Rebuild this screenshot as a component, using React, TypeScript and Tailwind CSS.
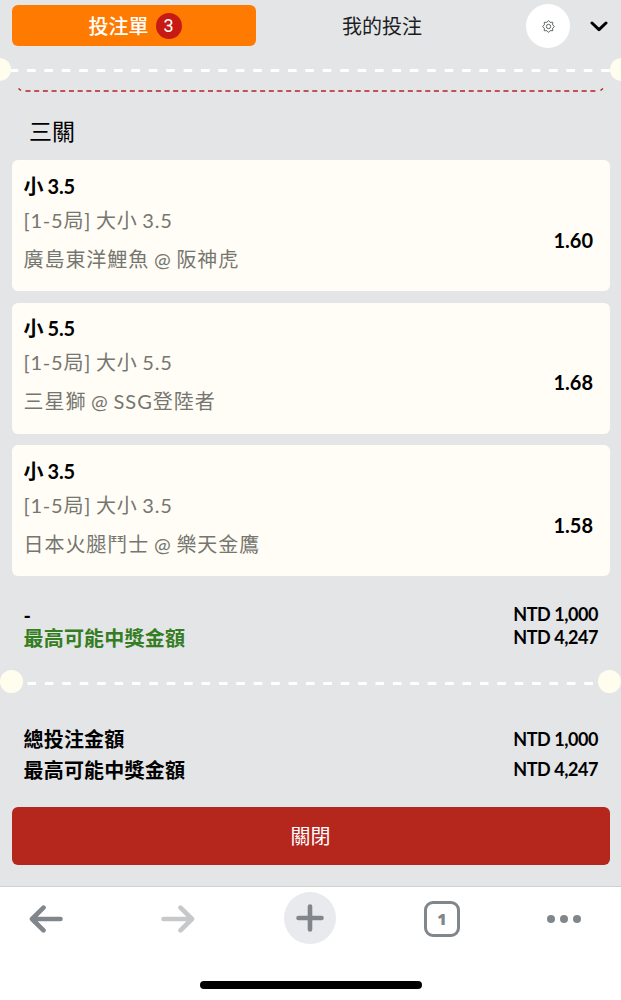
interface Selection {
  pick: string;
  market: string;
  match: string;
  odds: string;
}

const selections: Selection[] = [
  {
    pick: "小 3.5",
    market: "[1-5局] 大小 3.5",
    match: "廣島東洋鯉魚 @ 阪神虎",
    odds: "1.60",
  },
  {
    pick: "小 5.5",
    market: "[1-5局] 大小 5.5",
    match: "三星獅 @ SSG登陸者",
    odds: "1.68",
  },
  {
    pick: "小 3.5",
    market: "[1-5局] 大小 3.5",
    match: "日本火腿鬥士 @ 樂天金鷹",
    odds: "1.58",
  },
];

function SelectionCard({ selection }: { selection: Selection }) {
  return (
    <div className="flex h-[131px] items-center justify-between rounded-md bg-[#fffdf6] pr-[16.5px] pl-[12px]">
      <div className="-mt-[3px] text-[20px] tracking-[0.95px] text-[#767670] [word-spacing:-1.3px]">
        <p className="h-[33px] leading-[33px] font-bold tracking-[-0.25px] text-black [word-spacing:-0.3px]">
          {selection.pick}
        </p>
        <p className="h-[37px] leading-[35px] tracking-[0.82px]">
          {selection.market}
        </p>
        <p className="h-[39px] leading-[39px]">{selection.match}</p>
      </div>
      <span className="mt-[28px] text-[20px] leading-[30px] font-bold text-black">
        {selection.odds}
      </span>
    </div>
  );
}

function TicketDivider({ edge }: { edge?: boolean }) {
  return (
    <div
      className={
        edge
          ? "-mx-[12px] flex h-[24px] items-center justify-between"
          : "flex h-[24px] items-center justify-between"
      }
    >
      <span className="h-[23px] w-[23px] shrink-0 rounded-full bg-[#fffdee]" />
      <svg
        className="mt-[3px] h-[3px] min-w-0 flex-1"
        preserveAspectRatio="none"
      >
        <line
          x1={edge ? 0 : 4.5}
          y1="1.5"
          x2="100%"
          y2="1.5"
          stroke="white"
          strokeWidth="3"
          strokeDasharray="8.6 8.8"
          strokeDashoffset={edge ? 1.4 : 0}
        />
      </svg>
      <span className="h-[23px] w-[23px] shrink-0 rounded-full bg-[#fffdee]" />
    </div>
  );
}

function GearIcon() {
  return (
    <svg
      width="13"
      height="13"
      viewBox="0 0 24 24"
      fill="none"
      stroke="#55595c"
      strokeWidth="1.7"
      strokeLinejoin="round"
    >
      <path d="M12 1 L15 4.3 L19.8 4.2 L19.7 9 L23 12 L19.7 15 L19.8 19.8 L15 19.7 L12 23 L9 19.7 L4.2 19.8 L4.3 15 L1 12 L4.3 9 L4.2 4.2 L9 4.3 Z" />
      <circle cx="12" cy="12" r="4" />
    </svg>
  );
}

function BetSlipTabs() {
  return (
    <div className="flex h-[57px] items-start pt-[5px] pr-[13px] pl-[12px] text-[20px]">
      <div className="flex h-[41px] w-[244px] items-center justify-center gap-[7px] rounded-md bg-[#ff7a00] pl-[2px] text-white">
        <span className="leading-[30px] font-medium">投注單</span>
        <span className="flex h-[26px] w-[26px] items-center justify-center rounded-full bg-[#c71a12] font-['Roboto'] text-[18px] leading-none">
          3
        </span>
      </div>
      <div className="flex h-[41px] w-[252px] items-center justify-center text-[#1b1d1f]">
        我的投注
      </div>
      <div className="-mt-[1px] ml-[18px] flex h-[44px] w-[44px] items-center justify-center rounded-full bg-white">
        <GearIcon />
      </div>
      <svg
        className="mt-[16px] ml-auto"
        width="18"
        height="12"
        viewBox="0 0 18 12"
        fill="none"
        stroke="black"
        strokeWidth="3"
        strokeLinecap="round"
        strokeLinejoin="round"
      >
        <path d="M2 2 L9 8.7 L16 2" />
      </svg>
    </div>
  );
}

function BrowserBar() {
  return (
    <div className="flex h-[114px] flex-col items-center border-t border-[#cfd0d2] bg-white text-[#80868b]">
      <div className="mt-[5px] flex h-[52px] w-full items-center gap-[88px] pl-[29px]">
        <svg
          className="mt-[1px] shrink-0"
          width="34"
          height="28"
          viewBox="0 0 34 28"
          fill="none"
          stroke="currentColor"
          strokeWidth="4.6"
          strokeLinecap="round"
          strokeLinejoin="round"
        >
          <path d="M31.5 14 H3 M14.5 2.7 L3 14 L14.5 25.3" />
        </svg>
        <svg
          className="mt-[1px] ml-[10px] shrink-0"
          width="34"
          height="28"
          viewBox="0 0 34 28"
          fill="none"
          stroke="#c7c8c9"
          strokeWidth="4.6"
          strokeLinecap="round"
          strokeLinejoin="round"
        >
          <path d="M2.5 14 H31 M19.5 2.7 L31 14 L19.5 25.3" />
        </svg>
        <div className="ml-[1px] flex h-[52px] w-[52px] shrink-0 items-center justify-center rounded-full bg-[#e9eaee]">
          <svg
            width="28"
            height="28"
            viewBox="0 0 28 28"
            fill="none"
            stroke="currentColor"
            strokeWidth="4.6"
            strokeLinecap="round"
          >
            <path d="M14 2.5 V25.5 M2.5 14 H25.5" />
          </svg>
        </div>
        <div className="mt-[2px] flex h-[36px] w-[36px] shrink-0 items-center justify-center rounded-[9px] border-[3.5px] border-current font-['Open_Sans'] text-[16px] leading-none font-extrabold">
          1
        </div>
        <svg
          className="mt-[1px] -ml-[1px] shrink-0"
          width="34"
          height="8"
          viewBox="0 0 34 8"
          fill="currentColor"
        >
          <circle cx="4" cy="4" r="4" />
          <circle cx="17" cy="4" r="4" />
          <circle cx="30" cy="4" r="4" />
        </svg>
      </div>
      <div className="mt-[37px] h-[8px] w-[222px] rounded-full bg-black" />
    </div>
  );
}

export default function App() {
  return (
    <div
      lang="zh-Hant"
      className="flex h-[1000px] w-[621px] flex-col overflow-hidden bg-[#e4e5e7] font-['Lato','Noto_Sans_CJK_TC',sans-serif] text-black"
    >
      <BetSlipTabs />
      <TicketDivider edge />

      {/* Bottom edge of the previous slip */}
      <svg
        className="mt-[6px] ml-[17px] shrink-0"
        width="588"
        height="6"
        fill="none"
        stroke="#b51f2c"
        strokeWidth="1.4"
      >
        <path d="M1.5 1.5 L4 3.5 M586 1.5 L583.5 3.5" />
        <path d="M8.5 4 H582" strokeDasharray="5 3.69" />
      </svg>

      <h2 className="mt-[20px] ml-[29px] h-[36px] text-[23px] leading-[36px]">
        三關
      </h2>

      <div className="mx-[11.5px] mt-[11.4px] flex flex-col gap-[11.5px]">
        {selections.map((selection) => (
          <SelectionCard key={selection.match} selection={selection} />
        ))}
      </div>

      <div className="mt-[27.6px] flex justify-between pr-[23px] pl-[23.5px] font-bold">
        <div className="text-[20px] leading-[23.5px] tracking-[0.2px]">
          <p>-</p>
          <p className="text-[#357d22]">最高可能中獎金額</p>
        </div>
        <div className="-mt-[1px] text-right text-[18px] leading-[23.5px] tracking-[-0.45px]">
          <p>NTD 1,000</p>
          <p>NTD 4,247</p>
        </div>
      </div>

      <div className="mt-[19px]">
        <TicketDivider />
      </div>

      <div className="mt-[30px] pr-[23px] pl-[23.5px] font-bold">
        <div className="flex h-[30.5px] items-center justify-between">
          <span className="text-[20px] tracking-[0.2px]">總投注金額</span>
          <span className="text-[18px] tracking-[-0.45px]">NTD 1,000</span>
        </div>
        <div className="flex h-[30.5px] items-center justify-between">
          <span className="text-[20px] tracking-[0.2px]">
            最高可能中獎金額
          </span>
          <span className="text-[18px] tracking-[-0.45px]">NTD 4,247</span>
        </div>
      </div>

      <button className="mx-[11.5px] mt-[22px] h-[58px] shrink-0 rounded-md bg-[#b5261c] text-[20px] text-white">
        關閉
      </button>

      <div className="mt-auto">
        <BrowserBar />
      </div>
    </div>
  );
}
